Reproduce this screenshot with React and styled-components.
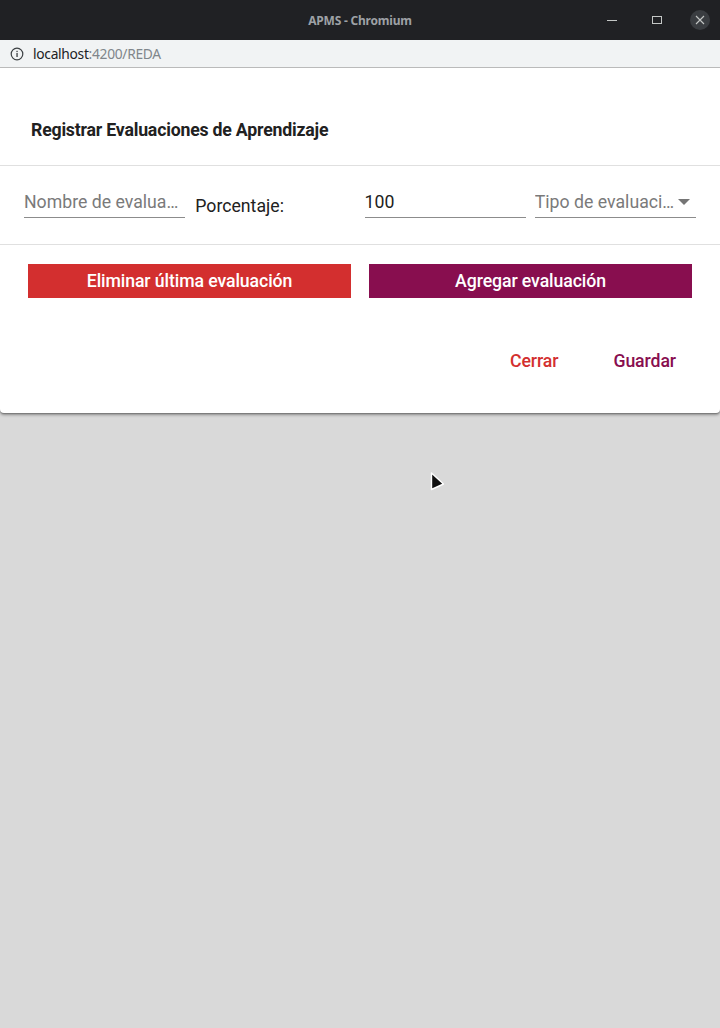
import React from "react";
import styled, { createGlobalStyle } from "styled-components";

const GlobalStyle = createGlobalStyle`
  html, body {
    margin: 0;
    padding: 0;
    background: #d9d9d9;
  }
  body {
    font-family: Roboto, "Noto Sans", sans-serif;
  }
`;

const Page = styled.div`
  position: relative;
  width: 720px;
  height: 1028px;
  background: #d9d9d9;
  overflow: hidden;
`;

const TitleBar = styled.div`
  height: 40px;
  background: #202124;
  display: flex;
  align-items: center;
  justify-content: center;
  position: relative;
`;

const WindowTitle = styled.span`
  font-family: "Noto Sans", sans-serif;
  font-weight: 700;
  font-size: 12px;
  color: #9ea1a6;
  letter-spacing: -0.2px;
`;

const WindowControls = styled.div`
  position: absolute;
  right: 10px;
  top: 0;
  height: 40px;
  display: flex;
  align-items: center;
  gap: 20px;
`;

const ControlButton = styled.div`
  width: 20px;
  height: 20px;
  border-radius: 50%;
  display: flex;
  align-items: center;
  justify-content: center;
  background: ${(p) => (p.$filled ? "#3a3d41" : "transparent")};
  margin-left: ${(p) => p.$ml || 0}px;
`;

const AddressBar = styled.div`
  height: 27px;
  background: #f1f3f4;
  border-bottom: 1px solid #bdbdbd;
  display: flex;
  align-items: center;
  padding-left: 10px;
  gap: 9px;
  font-family: "Noto Sans", sans-serif;
  font-size: 13.8px;
  letter-spacing: -0.3px;
`;

const Host = styled.span`
  color: #202124;
`;

const Path = styled.span`
  color: #80868b;
`;

const Card = styled.div`
  background: #fff;
  border-radius: 0 0 4px 4px;
  box-shadow: 0 2px 3px rgba(0, 0, 0, 0.35), 0 1px 1px rgba(0, 0, 0, 0.2);
`;

const Header = styled.div`
  padding: 52px 31px 25px;
  border-bottom: 1px solid #e0e0e0;
`;

const Title = styled.h2`
  margin: 0;
  font-size: 17.7px;
  line-height: 20px;
  font-weight: 700;
  color: #212121;
  letter-spacing: -0.2px;
`;

const FormRow = styled.div`
  display: grid;
  grid-template-columns: repeat(4, 1fr);
  column-gap: 9px;
  padding: 24px 24px 26px;
  border-bottom: 1px solid #e0e0e0;
`;

const Field = styled.div`
  display: flex;
  align-items: center;
  height: 24px;
  padding-bottom: 3px;
  border-bottom: 1px solid #8c8c8c;
  font-size: 17.7px;
  color: ${(p) => (p.$value ? "#212121" : "#7a7a7a")};
  overflow: hidden;
  white-space: nowrap;
`;

const FieldText = styled.span`
  flex: 1;
  min-width: 0;
  overflow: hidden;
  text-overflow: ellipsis;
`;

const Label = styled.div`
  font-size: 17.7px;
  color: #212121;
  padding: 4px 0 0 1px;
  line-height: 24px;
`;

const Arrow = styled.span`
  width: 0;
  height: 0;
  border-left: 6px solid transparent;
  border-right: 6px solid transparent;
  border-top: 6px solid #757575;
  margin: 0 6px 0 3px;
`;

const ButtonRow = styled.div`
  display: grid;
  grid-template-columns: 1fr 1fr;
  column-gap: 18px;
  padding: 19px 28px 0;
`;

const FlatButton = styled.button`
  height: 34px;
  border: none;
  border-radius: 0;
  background: ${(p) => p.$color};
  color: #fff;
  font-family: Roboto, sans-serif;
  font-size: 17.7px;
  font-weight: 500;
  letter-spacing: -0.1px;
  cursor: pointer;
`;

const Actions = styled.div`
  display: flex;
  justify-content: flex-end;
  gap: 23px;
  padding: 45px 28px 34px;
`;

const TextButton = styled.button`
  height: 36px;
  padding: 0 16px;
  border: none;
  background: transparent;
  color: ${(p) => p.$color};
  font-family: Roboto, sans-serif;
  font-size: 17.7px;
  font-weight: 500;
  letter-spacing: -0.1px;
  cursor: pointer;
`;

const Pointer = styled.svg`
  position: absolute;
  left: 429px;
  top: 471px;
`;

const RED = "#d32f2f";
const PURPLE = "#880e4f";

export default function App() {
  return (
    <Page>
      <GlobalStyle />
      <TitleBar>
        <WindowTitle>APMS - Chromium</WindowTitle>
        <WindowControls>
          <ControlButton>
            <svg width="12" height="12" viewBox="0 0 12 12">
              <line x1="1" y1="6.5" x2="11" y2="6.5" stroke="#c4c7c5" strokeWidth="1" />
            </svg>
          </ControlButton>
          <ControlButton $ml={5}>
            <svg width="12" height="12" viewBox="0 0 12 12">
              <rect x="1.5" y="2.5" width="9" height="7" fill="none" stroke="#c4c7c5" strokeWidth="1" />
            </svg>
          </ControlButton>
          <ControlButton $filled $ml={3}>
            <svg width="10" height="10" viewBox="0 0 10 10">
              <path d="M1 1 L9 9 M9 1 L1 9" stroke="#c4c7c5" strokeWidth="1.1" />
            </svg>
          </ControlButton>
        </WindowControls>
      </TitleBar>
      <AddressBar>
        <svg width="14" height="14" viewBox="0 0 14 14">
          <circle cx="7" cy="7" r="5.8" fill="none" stroke="#3c4043" strokeWidth="1.2" />
          <rect x="6.4" y="6" width="1.3" height="4" fill="#3c4043" />
          <rect x="6.4" y="3.8" width="1.3" height="1.3" fill="#3c4043" />
        </svg>
        <span>
          <Host>localhost</Host>
          <Path>:4200/REDA</Path>
        </span>
      </AddressBar>
      <Card>
        <Header>
          <Title>Registrar Evaluaciones de Aprendizaje</Title>
        </Header>
        <FormRow>
          <Field>
            <FieldText>Nombre de evaluación</FieldText>
          </Field>
          <Label>Porcentaje:</Label>
          <Field $value>
            <FieldText>100</FieldText>
          </Field>
          <Field>
            <FieldText>Tipo de evaluación</FieldText>
            <Arrow />
          </Field>
        </FormRow>
        <ButtonRow>
          <FlatButton $color={RED}>Eliminar última evaluación</FlatButton>
          <FlatButton $color={PURPLE}>Agregar evaluación</FlatButton>
        </ButtonRow>
        <Actions>
          <TextButton $color={RED}>Cerrar</TextButton>
          <TextButton $color={PURPLE}>Guardar</TextButton>
        </Actions>
      </Card>
      <Pointer width="18" height="24" viewBox="0 0 18 24">
        <path d="M2.5 2 L2.5 18.5 L14.5 13 Z" fill="#111" stroke="#fff" strokeWidth="1.4" strokeLinejoin="round" />
      </Pointer>
    </Page>
  );
}
